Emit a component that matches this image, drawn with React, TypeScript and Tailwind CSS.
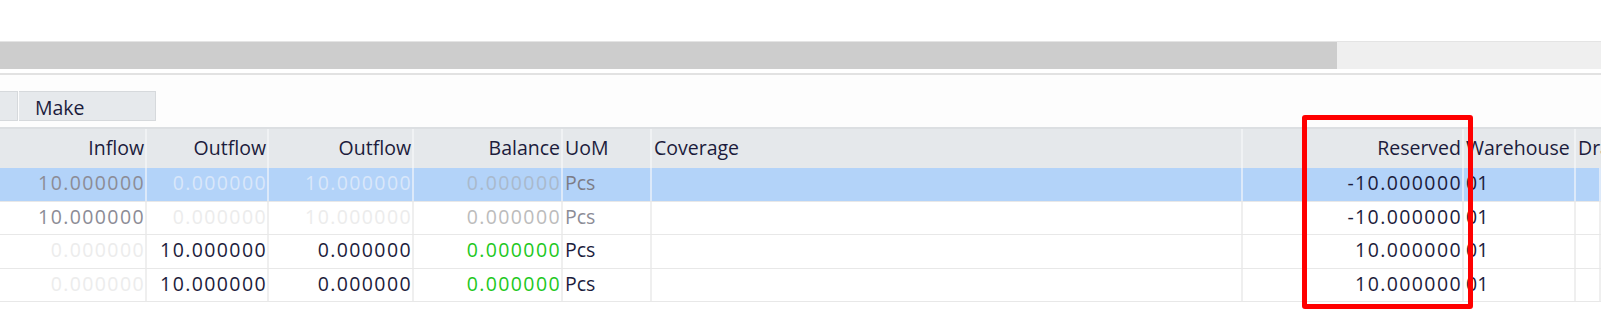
import React from 'react';

type Cell = { text: string; color?: string; align?: 'right' | 'left'; num?: boolean };

const DARK = 'text-[#1c1c3c]';

const cols = 'grid grid-cols-[147px_122px_145px_149px_89px_591px_221px_112px_1fr]';

const headers: { label: string; align: 'left' | 'right' }[] = [
    { label: 'Inflow', align: 'right' },
    { label: 'Outflow', align: 'right' },
    { label: 'Outflow', align: 'right' },
    { label: 'Balance', align: 'right' },
    { label: 'UoM', align: 'left' },
    { label: 'Coverage', align: 'left' },
    { label: 'Reserved', align: 'right' },
    { label: 'Warehouse', align: 'left' },
    { label: 'Dra', align: 'left' },
];

const rows: { selected: boolean; cells: Cell[] }[] = [
    {
        selected: true,
        cells: [
            { text: '10.000000', color: 'text-[#8c8c96]', num: true },
            { text: '0.000000', color: 'text-[#d9e7fa]', num: true },
            { text: '10.000000', color: 'text-[#d9e7fa]', num: true },
            { text: '0.000000', color: 'text-[#a9b9cc]', num: true },
            { text: 'Pcs', color: 'text-[#7c7c86]', align: 'left' },
            { text: '', align: 'left' },
            { text: '-10.000000', color: DARK, num: true },
            { text: '01', color: DARK, align: 'left' },
            { text: '', align: 'left' },
        ],
    },
    {
        selected: false,
        cells: [
            { text: '10.000000', color: 'text-[#8c8c96]', num: true },
            { text: '0.000000', color: 'text-[#ececec]', num: true },
            { text: '10.000000', color: 'text-[#ececec]', num: true },
            { text: '0.000000', color: 'text-[#bcbcbc]', num: true },
            { text: 'Pcs', color: 'text-[#8c8c96]', align: 'left' },
            { text: '', align: 'left' },
            { text: '-10.000000', color: DARK, num: true },
            { text: '01', color: DARK, align: 'left' },
            { text: '', align: 'left' },
        ],
    },
    {
        selected: false,
        cells: [
            { text: '0.000000', color: 'text-[#ececec]', num: true },
            { text: '10.000000', color: DARK, num: true },
            { text: '0.000000', color: DARK, num: true },
            { text: '0.000000', color: 'text-[#1ec81e]', num: true },
            { text: 'Pcs', color: DARK, align: 'left' },
            { text: '', align: 'left' },
            { text: '10.000000', color: DARK, num: true },
            { text: '01', color: DARK, align: 'left' },
            { text: '', align: 'left' },
        ],
    },
    {
        selected: false,
        cells: [
            { text: '0.000000', color: 'text-[#ececec]', num: true },
            { text: '10.000000', color: DARK, num: true },
            { text: '0.000000', color: DARK, num: true },
            { text: '0.000000', color: 'text-[#1ec81e]', num: true },
            { text: 'Pcs', color: DARK, align: 'left' },
            { text: '', align: 'left' },
            { text: '10.000000', color: DARK, num: true },
            { text: '01', color: DARK, align: 'left' },
            { text: '', align: 'left' },
        ],
    },
];

export default function App() {
    return (
        <div className="relative w-[1601px] h-[334px] overflow-hidden bg-white font-['Open_Sans',sans-serif] text-[19.5px] leading-none">
            {/* horizontal scroll bar */}
            <div className="h-[41px]" />
            <div className="flex h-[28px] border-t border-[#e4e4e4]">
                <div className="w-[1337px] bg-[#cdcdcd]" />
                <div className="flex-1 bg-[#efefef]" />
            </div>
            <div className="h-[4px]" />
            <div className="h-[2px] bg-[#e2e2e2]" />

            {/* tabs */}
            <div className="h-[16px] bg-[#fdfdfd]" />
            <div className="flex h-[30px] bg-[#fdfdfd]">
                <div className="w-[18px] bg-[#e6e9ec] border-y border-r border-[#d6d9dc]" />
                <div className="w-[137px] ml-px bg-[#e6e9ec] border-y border-r border-[#d6d9dc] flex items-center pt-[4px] pl-[16px] text-[#1c1c3c]">
                    Make
                </div>
            </div>
            <div className="h-[6px] bg-[#fdfdfd]" />

            {/* grid header */}
            <div className={`${cols} h-[41px] bg-[#e5e8eb] border-t-2 border-[#dcdfe2] text-[#1c1c3c]`}>
                {headers.map((h, i) => (
                    <div
                        key={i}
                        className={`flex items-center pb-[2px] border-r-2 border-[#f0f2f4] whitespace-nowrap ${
                            h.align === 'right' ? 'justify-end pr-[1px]' : 'justify-start pl-[2px]'
                        }`}
                    >
                        {h.label}
                    </div>
                ))}
            </div>

            {/* grid rows */}
            {rows.map((r, ri) => (
                <div
                    key={ri}
                    className={`${cols} h-[33.5px] border-b border-[#e8e8e8] ${r.selected ? 'bg-[#b3d3f9]' : 'bg-white'}`}
                >
                    {r.cells.map((c, ci) => (
                        <div
                            key={ci}
                            className={`flex items-center pb-[3px] whitespace-nowrap border-r-2 ${
                                r.selected ? 'border-[#dce9fa]' : 'border-[#efefef]'
                            } ${c.num ? 'justify-end pr-0 tracking-[1.4px]' : 'justify-start pl-[2px]'} ${c.color ?? DARK}`}
                        >
                            {c.text}
                        </div>
                    ))}
                </div>
            ))}

            {/* red highlight annotation */}
            <div className="absolute left-[1302px] top-[115px] w-[171px] h-[194px] border-[5px] border-[#ff0000] rounded-[3px]" />
        </div>
    );
}
